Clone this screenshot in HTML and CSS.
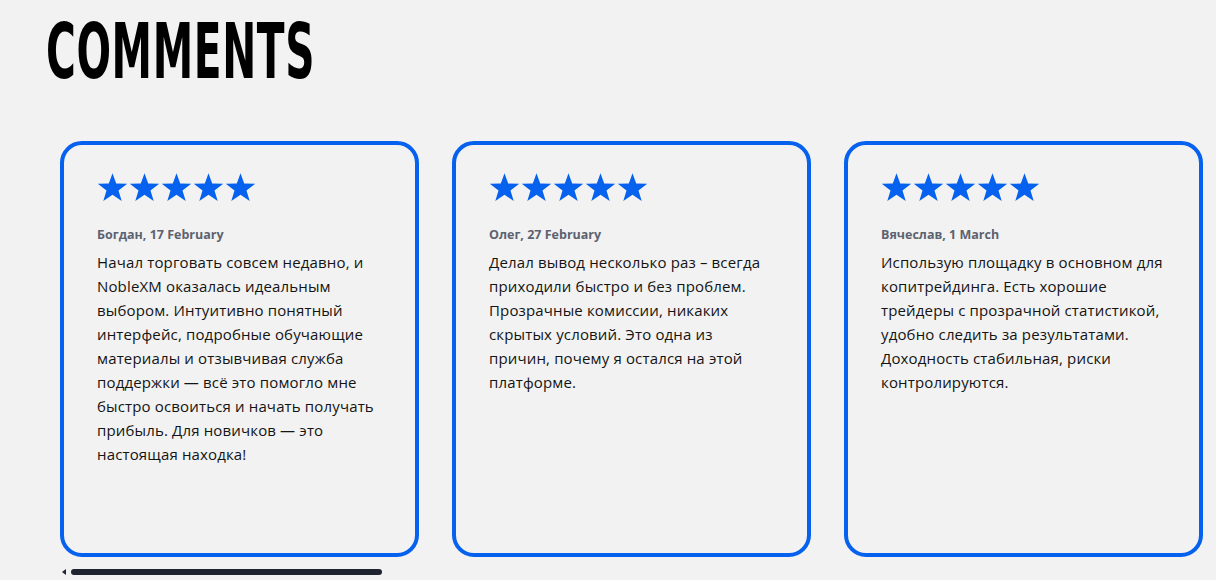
FILE: index.html
```html
<!DOCTYPE html>
<html lang="ru">
<head>
<meta charset="utf-8">
<title>Comments</title>
<link rel="stylesheet" href="styles.css">
</head>
<body>
<section class="comments">
  <h1 class="title"><span class="title-text">COMMENTS</span></h1>
  <div class="track">
    <article class="card">
      <div class="stars">
        <svg viewBox="0 0 160 30" width="160" height="30"><defs><polygon id="s" points="15.5,0.3 19.2,10.6 30.2,10.8 21.5,17.4 24.7,27.9 15.5,21.7 6.3,27.9 9.5,17.4 0.8,10.8 11.8,10.6"/></defs><use href="#s" x="0"/><use href="#s" x="32"/><use href="#s" x="64"/><use href="#s" x="96"/><use href="#s" x="128"/></svg>
      </div>
      <div class="author">Богдан, 17 February</div>
      <p class="text">Начал торговать совсем недавно, и NobleXM оказалась идеальным выбором. Интуитивно понятный интерфейс, подробные обучающие материалы и отзывчивая служба поддержки — всё это помогло мне быстро освоиться и начать получать прибыль. Для новичков — это настоящая находка!</p>
    </article>
    <article class="card">
      <div class="stars">
        <svg viewBox="0 0 160 30" width="160" height="30"><use href="#s" x="0"/><use href="#s" x="32"/><use href="#s" x="64"/><use href="#s" x="96"/><use href="#s" x="128"/></svg>
      </div>
      <div class="author">Олег, 27 February</div>
      <p class="text">Делал вывод несколько раз – всегда приходили быстро и без проблем. Прозрачные комиссии, никаких скрытых условий. Это одна из причин, почему я остался на этой платформе.</p>
    </article>
    <article class="card">
      <div class="stars">
        <svg viewBox="0 0 160 30" width="160" height="30"><use href="#s" x="0"/><use href="#s" x="32"/><use href="#s" x="64"/><use href="#s" x="96"/><use href="#s" x="128"/></svg>
      </div>
      <div class="author">Вячеслав, 1 March</div>
      <p class="text">Использую площадку в основном для копитрейдинга. Есть хорошие трейдеры с прозрачной статистикой, удобно следить за результатами. Доходность стабильная, риски контролируются.</p>
    </article>
  </div>
  <div class="scrollbar">
    <span class="arrow"></span>
    <span class="thumb"></span>
  </div>
</section>
</body>
</html>
```

FILE: styles.css
```css
html, body {
  margin: 0;
  padding: 0;
  background: #f2f2f2;
  overflow: hidden;
}
body {
  width: 1216px;
  height: 580px;
  font-family: "Open Sans", "Noto Sans", sans-serif;
}
.comments {
  padding: 0 0 0 46px;
}
.title {
  margin: 0;
  height: 141px;
  padding-top: 14px;
  box-sizing: border-box;
  font-family: "DejaVu Sans Condensed", "DejaVu Sans", sans-serif;
  font-weight: bold;
  font-size: 76px;
  line-height: 76px;
  color: #000;
}
.title-text {
  display: inline-block;
  transform: scaleX(0.595);
  transform-origin: left center;
  letter-spacing: 1px;
}
.track {
  display: flex;
  gap: 33px;
  margin-left: 14px;
}
.card {
  flex: 0 0 359px;
  height: 416px;
  box-sizing: border-box;
  border: 4px solid #0561ee;
  border-radius: 22px;
  padding: 28px 33px 0 33px;
}
.stars svg {
  display: block;
  fill: #0561ee;
}
.author {
  margin-top: 23px;
  font-size: 12.5px;
  font-weight: 700;
  color: #5c6270;
  line-height: 18px;
}
.text {
  margin: 6px 0 0;
  font-size: 15px;
  letter-spacing: 0.15px;
  line-height: 24px;
  color: #141414;
}
.scrollbar {
  display: flex;
  align-items: center;
  gap: 5px;
  margin: 10px 0 0 16px;
  height: 10px;
}
.arrow {
  width: 0;
  height: 0;
  border-top: 3px solid transparent;
  border-bottom: 3px solid transparent;
  border-right: 4px solid #1f2530;
}
.thumb {
  width: 311px;
  height: 6px;
  border-radius: 3px;
  background: #1f2530;
}
```
